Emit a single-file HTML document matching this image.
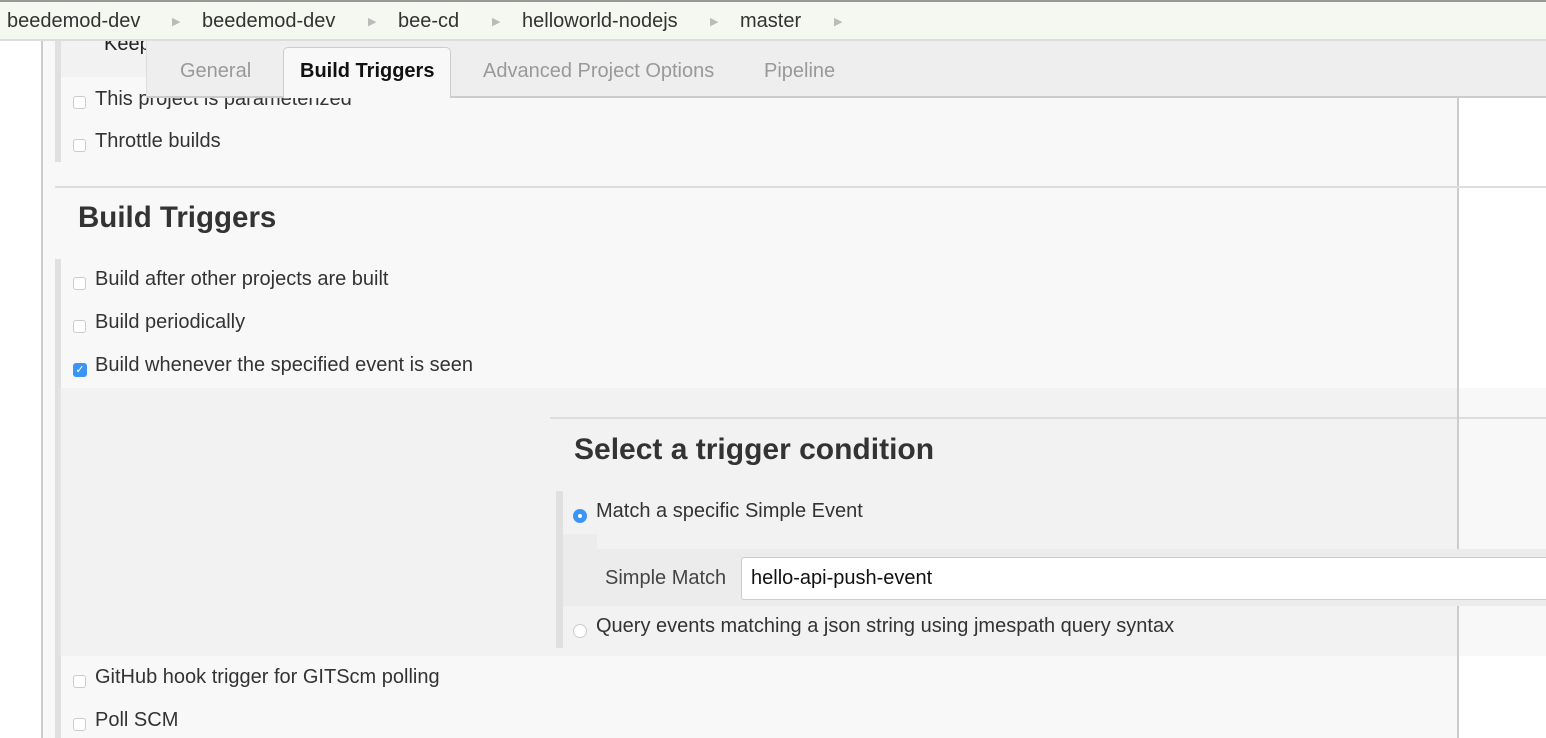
<!DOCTYPE html>
<html><head><meta charset="utf-8"><style>
*{margin:0;padding:0;box-sizing:border-box}
body{width:1546px;height:738px;overflow:hidden;position:relative;background:#fff;font-family:"Liberation Sans",Arial,sans-serif;color:#333;font-size:20px}
.a{position:absolute}
.t{position:absolute;white-space:nowrap;line-height:22px}
.cb{position:absolute;width:13px;height:13px;border:1px solid #ccc;border-radius:3px;background:#fff}
</style></head><body>
<div class="a" style="left:41px;top:0;width:2px;height:738px;background:#ccc"></div>
<div class="a" style="left:43px;top:0;width:1414px;height:738px;background:#f8f8f8"></div>
<div class="a" style="left:1457px;top:0;width:2px;height:738px;background:#ccc"></div>
<div class="a" style="left:55px;top:40px;width:6px;height:122px;background:#e0e0e0"></div>
<div class="a" style="left:61px;top:40px;width:85px;height:37px;background:#f2f2f2"></div>
<div class="t" style="left:104px;top:33px;color:#222">Keep</div>
<div class="a" style="left:55px;top:186px;width:1491px;height:2px;background:#ddd"></div>
<div class="t" style="left:78px;top:202px;font-size:29.5px;font-weight:bold;line-height:32px">Build Triggers</div>
<div class="a" style="left:55px;top:259px;width:6px;height:479px;background:#e0e0e0"></div>
<div class="a" style="left:58px;top:388px;width:1399px;height:268px;background:#f2f2f2"></div>
<div class="a" style="left:1459px;top:388px;width:87px;height:268px;background:#f8f8f8"></div>
<div class="a" style="left:58px;top:388px;width:3px;height:268px;background:#e4e4e4"></div>
<div class="a" style="left:550px;top:417px;width:996px;height:2px;background:#ddd"></div>
<div class="a" style="left:1457px;top:388px;width:2px;height:268px;background:#ccc"></div>
<div class="t" style="left:574px;top:434px;font-size:30px;font-weight:bold;line-height:32px">Select a trigger condition</div>
<div class="a" style="left:556px;top:491px;width:7px;height:157px;background:#e0e0e0"></div>
<div class="a" style="left:563px;top:534px;width:34px;height:15px;background:#ececec"></div>
<div class="a" style="left:563px;top:549px;width:983px;height:57px;background:#ececec"></div>
<div class="t" style="left:605px;top:567px;color:#444">Simple Match</div>
<div class="a" style="left:741px;top:557px;width:810px;height:43px;background:#fff;border:1px solid #ccc;border-radius:3px"></div>
<div class="t" style="left:751px;top:567px;color:#111">hello-api-push-event</div>
<div class="a" style="left:573px;top:509px;width:14px;height:14px;border-radius:50%;background:#3c95f5"></div>
<div class="a" style="left:578px;top:514px;width:4px;height:4px;border-radius:50%;background:#fff"></div>
<div class="t" style="left:596px;top:500px">Match a specific Simple Event</div>
<div class="a" style="left:573px;top:624px;width:14px;height:14px;border-radius:50%;background:#fff;border:1px solid #ccc"></div>
<div class="t" style="left:596px;top:615px">Query events matching a json string using jmespath query syntax</div>
<div class="cb" style="left:73px;top:96px"></div><div class="t" style="left:95px;top:88px">This project is parameterized</div>
<div class="cb" style="left:73px;top:139px"></div><div class="t" style="left:95px;top:130px">Throttle builds</div>
<div class="cb" style="left:73px;top:277px"></div><div class="t" style="left:95px;top:268px">Build after other projects are built</div>
<div class="cb" style="left:73px;top:320px"></div><div class="t" style="left:95px;top:311px">Build periodically</div>
<div class="a" style="left:73px;top:363px;width:14px;height:14px;border-radius:3px;background:#3c95f5;color:#fff;font-size:11px;line-height:14px;text-align:center">✓</div><div class="t" style="left:95px;top:354px">Build whenever the specified event is seen</div>
<div class="cb" style="left:73px;top:675px"></div><div class="t" style="left:95px;top:666px">GitHub hook trigger for GITScm polling</div>
<div class="cb" style="left:73px;top:718px"></div><div class="t" style="left:95px;top:709px">Poll SCM</div>
<div class="a" style="left:146px;top:41px;width:1400px;height:57px;background:#eee;border-bottom:2px solid #ccc;border-left:1px solid #ddd"></div>
<div class="a" style="left:283px;top:47px;width:168px;height:51px;background:#f8f8f8;border:1px solid #ccc;border-bottom:none;border-radius:5px 5px 0 0"></div>
<div class="t" style="left:180px;top:60px;color:#999">General</div>
<div class="t" style="left:300px;top:60px;color:#111;font-weight:bold">Build Triggers</div>
<div class="t" style="left:483px;top:60px;color:#999">Advanced Project Options</div>
<div class="t" style="left:764px;top:60px;color:#999">Pipeline</div>
<div class="a" style="left:0;top:0;width:1546px;height:41px;background:#f5f8f1;border-top:2px solid #999;border-bottom:2px solid #ddd"></div>
<div class="t" style="left:7px;top:10px;color:#333">beedemod-dev</div>
<div class="t" style="left:202px;top:10px;color:#333">beedemod-dev</div>
<div class="t" style="left:398px;top:10px;color:#333">bee-cd</div>
<div class="t" style="left:522px;top:10px;color:#333">helloworld-nodejs</div>
<div class="t" style="left:740px;top:10px;color:#333">master</div>
<div class="t" style="left:172px;top:11px;color:#bbb;font-size:11px">▶</div>
<div class="t" style="left:368px;top:11px;color:#bbb;font-size:11px">▶</div>
<div class="t" style="left:492px;top:11px;color:#bbb;font-size:11px">▶</div>
<div class="t" style="left:710px;top:11px;color:#bbb;font-size:11px">▶</div>
<div class="t" style="left:834px;top:11px;color:#bbb;font-size:11px">▶</div>
</body></html>
